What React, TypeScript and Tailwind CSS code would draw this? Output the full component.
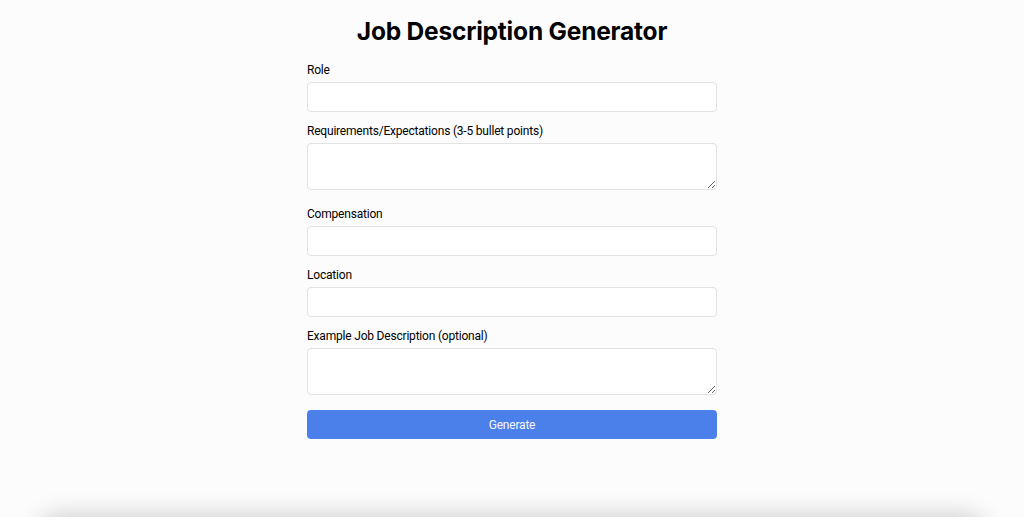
import React, { useState } from 'react';

const fields = [
  { key: 'role', label: 'Role', multiline: false },
  { key: 'requirements', label: 'Requirements/Expectations (3-5 bullet points)', multiline: true },
  { key: 'compensation', label: 'Compensation', multiline: false },
  { key: 'location', label: 'Location', multiline: false },
  { key: 'example', label: 'Example Job Description (optional)', multiline: true },
];

export default function App() {
  const [values, setValues] = useState<Record<string, string>>({});

  const update = (key: string, value: string) => setValues((v) => ({ ...v, [key]: value }));

  return (
    <div className="h-[517px] overflow-hidden bg-[#fcfcfc] flex flex-col font-['Roboto',sans-serif] text-black">
      <div className="w-[410px] mx-auto shrink-0">
        <h1 className="font-['Inter',sans-serif] text-[24.5px] leading-[32px] font-bold text-center mt-[15px] mb-[15px] tracking-[-0.2px]">
          Job Description Generator
        </h1>

        <form onSubmit={(e) => e.preventDefault()}>
          {fields.map((field) => (
            <div key={field.key} className={field.multiline ? 'mb-[16px]' : 'mb-[11px]'}>
              <label className="block text-[12px] leading-[16px] tracking-[-0.2px] mb-[4px]">{field.label}</label>
              {field.multiline ? (
                <textarea
                  value={values[field.key] || ''}
                  onChange={(e) => update(field.key, e.target.value)}
                  className="block w-full h-[47px] bg-white border border-[#e2e2e2] rounded-[4px] px-2 py-1 text-[13px] outline-none"
                />
              ) : (
                <input
                  type="text"
                  value={values[field.key] || ''}
                  onChange={(e) => update(field.key, e.target.value)}
                  className="block w-full h-[30px] bg-white border border-[#e2e2e2] rounded-[4px] px-2 text-[13px] outline-none"
                />
              )}
            </div>
          ))}

          <button
            type="submit"
            className="w-full h-[29px] -mt-[1px] bg-[#4b80ea] text-[#f4f7fe] text-[12px] tracking-[-0.2px] rounded-[4px]"
          >
            Generate
          </button>
        </form>
      </div>

      {/* edge of the card below the fold */}
      <div className="mt-auto mb-[-26px] h-[26px] mx-[40px] shrink-0 rounded-t-[16px] bg-[#fcfcfc] shadow-[0_0_26px_rgba(0,0,0,0.22)]" />
    </div>
  );
}
